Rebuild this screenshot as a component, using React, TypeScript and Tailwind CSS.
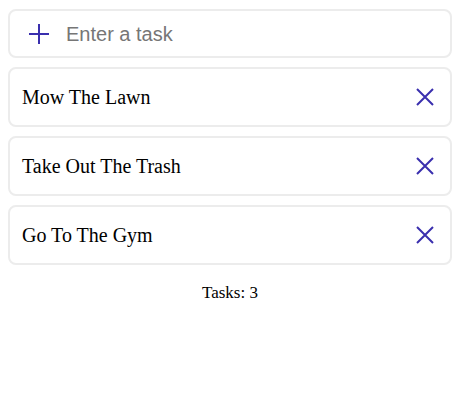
import { useState } from 'react';

const tasks = ['Mow The Lawn', 'Take Out The Trash', 'Go To The Gym'];

// Plus icon
const PlusIcon = () => (
  <svg width="20" height="20" viewBox="0 0 20 20" fill="none" stroke="#3a2fae" strokeWidth="2">
    <path d="M10 0V20M0 10H20" />
  </svg>
);

// X icon
const CloseIcon = () => (
  <svg width="18" height="18" viewBox="0 0 18 18" fill="none" stroke="#3a2fae" strokeWidth="2">
    <path d="M1 1L17 17M17 1L1 17" />
  </svg>
);

export default function App() {
  const [text, setText] = useState('');

  return (
    <div className="w-[444px] ml-[8px] pt-[9px] flex flex-col gap-[9px] font-['Liberation_Serif',serif] text-black bg-white">
      <div className="h-[49px] border-2 border-[#ececec] rounded-[8px] flex items-center pl-[19px] gap-[17px]">
        <PlusIcon />
        <input
          type="text"
          value={text}
          onChange={(e) => setText(e.target.value)}
          placeholder="Enter a task"
          className="flex-1 outline-none text-[20px] font-['Liberation_Sans',sans-serif] placeholder:text-[#767676] bg-transparent"
        />
      </div>

      {tasks.map((task) => (
        <div
          key={task}
          className="h-[60px] border-2 border-[#ececec] rounded-[8px] flex items-center justify-between pl-[12px] pr-[16px]"
        >
          <span className="text-[20px]">{task}</span>
          <button type="button" className="flex items-center">
            <CloseIcon />
          </button>
        </div>
      ))}

      <p className="text-center text-[17px] mt-[6px]">Tasks: {tasks.length}</p>
    </div>
  );
}
